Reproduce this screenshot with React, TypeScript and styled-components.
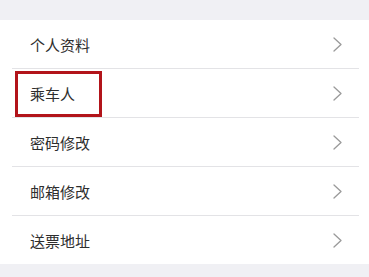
import React from "react";
import styled, { createGlobalStyle } from "styled-components";

const Global = createGlobalStyle`
  html, body { margin: 0; padding: 0; background: #f0f0f4; }
  body { font-family: "Noto Sans CJK SC", "Noto Sans", sans-serif; }
`;

const Page = styled.div`
  width: 369px;
  height: 277px;
  background: #f0f0f4;
  padding-top: 20px;
  box-sizing: border-box;
`;

const List = styled.ul`
  list-style: none;
  margin: 0;
  padding: 0;
  width: 100%;
  background: #ffffff;
`;

const Row = styled.li<{ $last?: boolean }>`
  position: relative;
  height: ${(p) => (p.$last ? "48px" : "49px")};
  padding-left: 12px;
  padding-right: 10px;
  display: flex;
  align-items: center;
  box-sizing: border-box;
  background: #ffffff;
`;

const Inner = styled.div<{ $last?: boolean }>`
  flex: 1;
  height: 100%;
  display: flex;
  align-items: center;
  justify-content: space-between;
  border-bottom: ${(p) => (p.$last ? "none" : "1px solid #e3e3e6")};
  box-sizing: border-box;
  padding-left: 18px;
  padding-right: 17px;
`;

const Label = styled.span`
  font-size: 15px;
  color: #2e2e2e;
  line-height: 1;
`;

const Highlight = styled.div`
  position: absolute;
  left: 15px;
  top: 2px;
  width: 87px;
  height: 46px;
  border: 3px solid #b2141a;
  box-sizing: border-box;
  pointer-events: none;
`;

const Chevron = () => (
  <svg width="9" height="15" viewBox="0 0 9 15" fill="none">
    <path d="M1 1 L8 7.5 L1 14" stroke="#9a9a9a" strokeWidth="1.3" strokeLinecap="round" strokeLinejoin="round" />
  </svg>
);

const items = ["个人资料", "乘车人", "密码修改", "邮箱修改", "送票地址"];

export default function App() {
  return (
    <Page>
      <Global />
      <List>
        {items.map((t, i) => {
          const last = i === items.length - 1;
          return (
            <Row key={t} $last={last}>
              <Inner $last={last}>
                <Label>{t}</Label>
                <Chevron />
              </Inner>
              {i === 1 && <Highlight />}
            </Row>
          );
        })}
      </List>
    </Page>
  );
}
